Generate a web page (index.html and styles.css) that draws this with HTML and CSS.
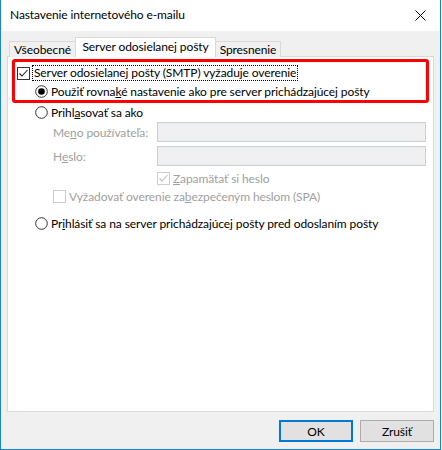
FILE: index.html
```html
<!DOCTYPE html>
<html lang="sk">
<head>
<meta charset="utf-8">
<title>Nastavenie internetového e-mailu</title>
<link rel="stylesheet" href="styles.css">
</head>
<body>
<div class="window">
  <div class="titlebar">
    <span class="title">Nastavenie internetového e-mailu</span>
    <svg class="close" width="11" height="11" viewBox="0 0 11 11"><path d="M0.5 0.5 L10.5 10.5 M10.5 0.5 L0.5 10.5" stroke="#000" stroke-width="1" fill="none"/></svg>
  </div>
  <div class="body">
    <div class="tabs">
      <div class="tab tab-general">Všeobecné</div>
      <div class="tab tab-active">Server odosielanej pošty</div>
      <div class="tab tab-advanced">Spresnenie</div>
    </div>
    <div class="panel">
      <div class="highlight">
        <div class="row row-auth">
          <svg class="box" width="13" height="13" viewBox="0 0 13 13"><rect x="0.5" y="0.5" width="12" height="12" fill="#fff" stroke="#333"/><path d="M2.5 6.5 L5 9 L10.5 3" stroke="#222" stroke-width="1.1" fill="none"/></svg>
          <span class="label focus">Server odosielanej pošty (SMTP) vyžaduje overenie</span>
        </div>
        <div class="row row-same">
          <svg class="radio" width="13" height="13" viewBox="0 0 13 13"><circle cx="6.5" cy="6.5" r="5.8" fill="#fff" stroke="#333"/><circle cx="6.5" cy="6.5" r="3.3" fill="#000"/></svg>
          <span class="label">Použiť rovna<u>k</u>é nastavenie ako pre server prichádzajúcej pošty</span>
        </div>
      </div>
      <div class="row row-login">
        <svg class="radio" width="13" height="13" viewBox="0 0 13 13"><circle cx="6.5" cy="6.5" r="5.8" fill="#fff" stroke="#333"/></svg>
        <span class="label">Prihl<u>a</u>sovať sa ako</span>
      </div>
      <div class="field-row field-user">
        <span class="field-label">Me<u>n</u>o používateľa:</span>
        <div class="input"></div>
      </div>
      <div class="field-row field-pass">
        <span class="field-label">H<u>e</u>slo:</span>
        <div class="input"></div>
      </div>
      <div class="row row-remember">
        <svg class="box" width="13" height="13" viewBox="0 0 13 13"><rect x="0.5" y="0.5" width="12" height="12" fill="#fff" stroke="#cccccc"/><path d="M2.5 6.5 L5 9 L10.5 3" stroke="#bdbdbd" stroke-width="1.1" fill="none"/></svg>
        <span class="label disabled"><u>Z</u>apamätať si heslo</span>
      </div>
      <div class="row row-spa">
        <svg class="box" width="13" height="13" viewBox="0 0 13 13"><rect x="0.5" y="0.5" width="12" height="12" fill="#fff" stroke="#cccccc"/></svg>
        <span class="label disabled">Vyžadovať overenie za<u>b</u>ezpečeným heslom (SPA)</span>
      </div>
      <div class="row row-before">
        <svg class="radio" width="13" height="13" viewBox="0 0 13 13"><circle cx="6.5" cy="6.5" r="5.8" fill="#fff" stroke="#333"/></svg>
        <span class="label">Pr<u>i</u>hlásiť sa na server prichádzajúcej pošty pred odoslaním pošty</span>
      </div>
    </div>
    <div class="buttons">
      <div class="button button-default">OK</div>
      <div class="button">Zrušiť</div>
    </div>
  </div>
</div>
</body>
</html>
```

FILE: styles.css
```css
html, body {
  margin: 0;
  padding: 0;
  background: #ffffff;
}

body {
  font-family: Lato, "Noto Sans", sans-serif;
  font-size: 12px;
  letter-spacing: -0.1px;
  color: #000;
}

.window {
  box-sizing: border-box;
  width: 441px;
  height: 450px;
  border: 1px solid #1883d7;
  border-top: none;
  display: flex;
  flex-direction: column;
  background: #f0f0f0;
}

.titlebar {
  height: 31px;
  flex: none;
  background: #ffffff;
  display: flex;
  align-items: center;
  justify-content: space-between;
  padding: 0 9px 1px 9px;
  box-sizing: border-box;
}

.title {
  font-size: 12px;
  line-height: 16px;
}

.close {
  display: block;
  margin-right: 5px;
}

.body {
  flex: 1;
  display: flex;
  flex-direction: column;
  padding: 7px 6px 7px 6px;
  min-height: 0;
}

.tabs {
  display: flex;
  align-items: flex-end;
  height: 19px;
  padding-left: 2px;
  margin-bottom: -1px;
  position: relative;
  z-index: 1;
}

.tab {
  box-sizing: border-box;
  height: 16px;
  border: 1px solid #d9d9d9;
  border-bottom: none;
  background: #f0f0f0;
  text-align: center;
  line-height: 15px;
  white-space: nowrap;
}

.tab-general {
  width: 66px;
  border-right: none;
}

.tab-active {
  width: 141px;
  height: 20px;
  background: #ffffff;
  line-height: 17px;
}

.tab-advanced {
  width: 65px;
  border-left: none;
}

.panel {
  flex: 1;
  background: #ffffff;
  border: 1px solid #d9d9d9;
  display: flex;
  flex-direction: column;
}

.highlight {
  margin: 2px 4px 0 4px;
  border: 3px solid #ff0000;
  border-radius: 3px;
  padding-top: 2px;
  height: 36px;
}

.row {
  display: flex;
  align-items: center;
  height: 18px;
  white-space: nowrap;
}

.box, .radio {
  display: block;
  flex: none;
}

.row-auth {
  padding-left: 2px;
}

.row-auth .label {
  margin-left: 2px;
}

.focus {
  outline: 1px dotted #000;
  padding: 0 1px;
  line-height: 14px;
}

.row-same {
  padding-left: 20px;
}

.radio + .label {
  margin-left: 3px;
}

.box + .label {
  margin-left: 3px;
}

.row-login {
  padding-left: 27px;
}

.field-row {
  display: flex;
  align-items: center;
  height: 20px;
  padding-left: 45px;
  padding-right: 7px;
}

.field-user {
  margin-top: 1px;
}

.field-pass {
  margin-top: 4px;
}

.field-label {
  width: 104px;
  flex: none;
  color: #a0a0a0;
  white-space: nowrap;
}

.input {
  flex: 1;
  align-self: stretch;
  background: #f0f0f0;
  border: 1px solid #c8ced6;
}

.row-remember {
  padding-left: 149px;
  margin-top: 3px;
}

.row-spa {
  padding-left: 45px;
}

.row-before {
  padding-left: 27px;
  margin-top: 9px;
}

.disabled {
  color: #a0a0a0;
}

.buttons {
  display: flex;
  justify-content: flex-end;
  gap: 7px;
  margin-top: 8px;
}

.button {
  box-sizing: border-box;
  width: 74px;
  height: 22px;
  background: #e1e1e1;
  border: 1px solid #adadad;
  display: flex;
  align-items: center;
  justify-content: center;
}

.button-default {
  border: 2px solid #0078d7;
}
```
